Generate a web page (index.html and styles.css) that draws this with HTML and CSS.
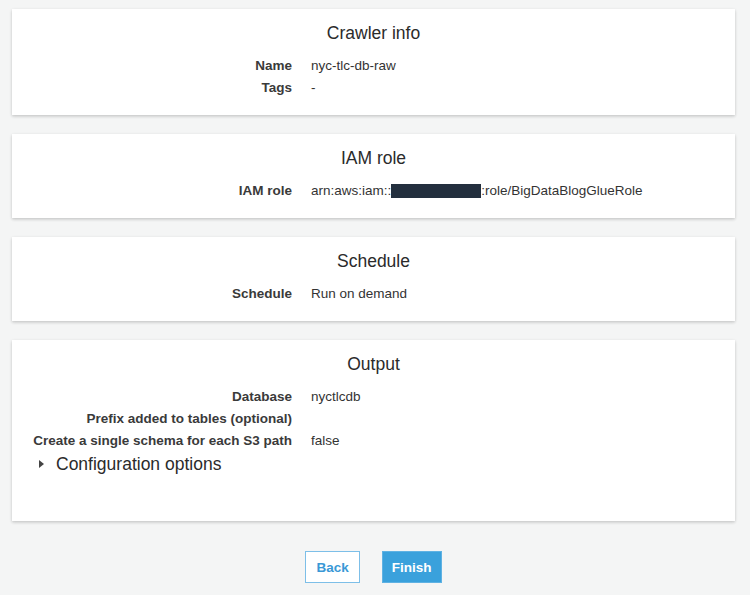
FILE: index.html
```html
<!DOCTYPE html>
<html>
<head>
<meta charset="utf-8">
<link rel="stylesheet" href="styles.css">
</head>
<body>
<main class="page">
  <section class="card">
    <h2 class="card-title">Crawler info</h2>
    <div class="rows">
      <div class="row"><span class="label">Name</span><span class="value">nyc-tlc-db-raw</span></div>
      <div class="row"><span class="label">Tags</span><span class="value">-</span></div>
    </div>
  </section>
  <section class="card">
    <h2 class="card-title">IAM role</h2>
    <div class="rows">
      <div class="row"><span class="label">IAM role</span><span class="value">arn:aws:iam::<span class="redact"></span>:role/BigDataBlogGlueRole</span></div>
    </div>
  </section>
  <section class="card">
    <h2 class="card-title">Schedule</h2>
    <div class="rows">
      <div class="row"><span class="label">Schedule</span><span class="value">Run on demand</span></div>
    </div>
  </section>
  <section class="card">
    <h2 class="card-title">Output</h2>
    <div class="rows">
      <div class="row"><span class="label">Database</span><span class="value">nyctlcdb</span></div>
      <div class="row"><span class="label">Prefix added to tables (optional)</span><span class="value"></span></div>
      <div class="row"><span class="label">Create a single schema for each S3 path</span><span class="value">false</span></div>
    </div>
    <div class="expander"><span class="caret"></span><span class="expander-text">Configuration options</span></div>
  </section>
  <div class="actions">
    <button class="btn btn-secondary">Back</button>
    <button class="btn btn-primary">Finish</button>
  </div>
</main>
</body>
</html>
```
FILE: styles.css
```css
html, body {
  margin: 0;
  padding: 0;
  background: #f4f5f5;
  font-family: "Liberation Sans", Arial, sans-serif;
  color: #333;
}
.page {
  padding: 9px 15px 0 12px;
  display: flex;
  flex-direction: column;
  gap: 19px;
}
.card {
  background: #fff;
  box-shadow: 0 1px 3px rgba(0, 0, 0, 0.16), 0 2px 3px rgba(0, 0, 0, 0.06);
  padding: 12px 0 16px;
}
.card-title {
  margin: 0 0 10px;
  font-size: 17.5px;
  font-weight: normal;
  line-height: 24px;
  text-align: center;
  color: #2b2b2b;
}
.row {
  display: grid;
  grid-template-columns: 280px 1fr;
  column-gap: 19px;
  font-size: 13.5px;
  line-height: 22px;
}
.label {
  text-align: right;
  font-weight: bold;
  color: #3a3a3a;
}
.value {
  color: #333;
}
.redact {
  display: inline-block;
  width: 90px;
  height: 14px;
  background: #232f3e;
  vertical-align: -3px;
}
.expander {
  display: flex;
  align-items: center;
  gap: 12px;
  padding: 0 0 29px 27px;
  line-height: 24px;
  margin-top: 0;
}
.caret {
  width: 0;
  height: 0;
  border-top: 4px solid transparent;
  border-bottom: 4px solid transparent;
  border-left: 5px solid #444;
}
.expander-text {
  font-size: 17.5px;
  color: #2b2b2b;
}
.actions {
  display: flex;
  justify-content: center;
  gap: 22px;
  margin-top: 11px;
}
.btn {
  font-family: "Liberation Sans", Arial, sans-serif;
  font-size: 13.5px;
  font-weight: bold;
  height: 32px;
  padding: 0 10px;
  border: 1px solid;
  border-radius: 0;
  cursor: pointer;
}
.btn-secondary {
  background: #fff;
  border-color: #7dbfe8;
  color: #3a98d6;
}
.btn-primary {
  background: #3aa1dc;
  border-color: #5fb2e3;
  color: #fff;
  padding: 0 9px;
}
```
